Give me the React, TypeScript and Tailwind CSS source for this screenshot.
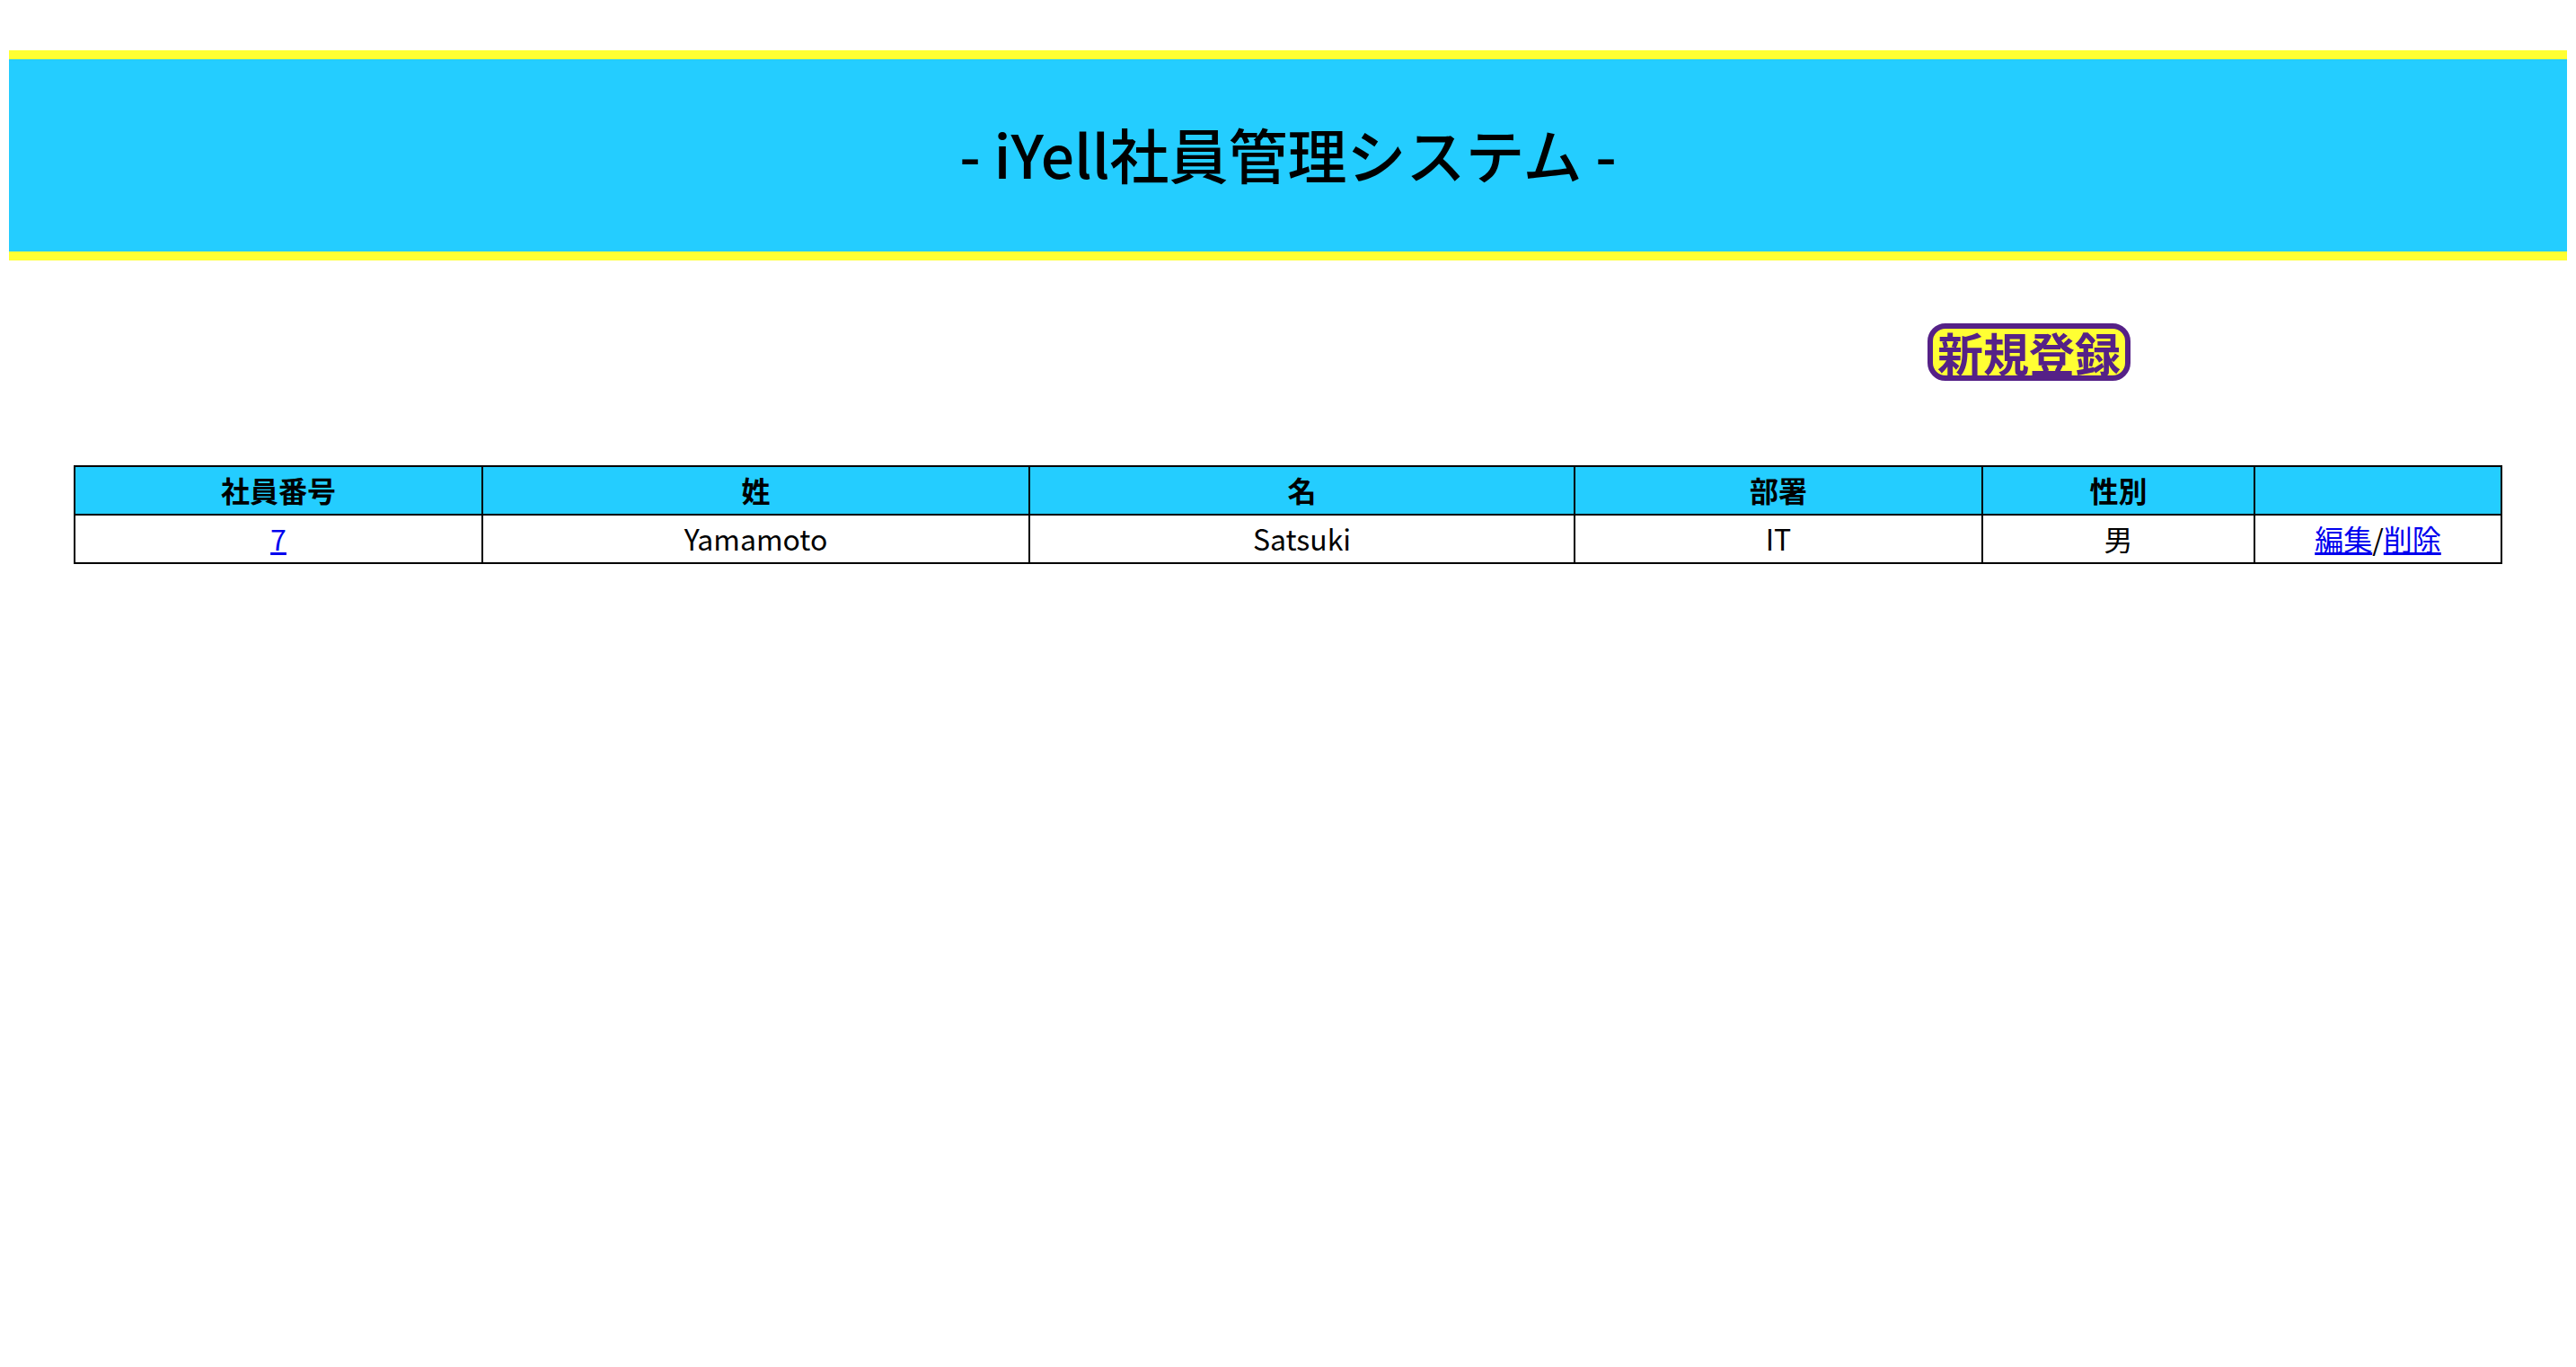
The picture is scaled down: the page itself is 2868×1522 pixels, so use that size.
const font = { fontFamily: '"Noto Sans CJK JP", "Noto Sans", sans-serif' }

const columns = [
  { label: '社員番号', width: 'w-[454px]' },
  { label: '姓', width: 'w-[609px]' },
  { label: '名', width: 'w-[607px]' },
  { label: '部署', width: 'w-[454px]' },
  { label: '性別', width: 'w-[303px]' },
  { label: '', width: 'w-[275px]' },
]

const employees = [{ id: 7, lastName: 'Yamamoto', firstName: 'Satsuki', dept: 'IT', gender: '男' }]

export default function App() {
  return (
    <div className="min-h-[1522px] bg-white text-black" style={font}>
      <div className="pt-[56px] px-[10px]">
        <header className="h-[234px] bg-[#24cdff] border-y-[10px] border-[#ffff33] flex items-center justify-center">
          <h1 className="text-[66px] leading-none font-medium pb-[6px]">- iYell社員管理システム -</h1>
        </header>
      </div>

      <div className="flex mt-[70px] pl-[2146px]">
        <a
          href="#"
          className="h-[64px] px-[5px] flex items-center rounded-[20px] border-[6px] border-[#552187] bg-[#ffff33] text-[#552187] text-[51px] leading-none font-bold"
        >
          新規登録
        </a>
      </div>

      <div className="mt-[94px] px-[82px]">
        <table className="w-[2704px] border-collapse border-2 border-black text-[32px]">
          <thead>
            <tr className="bg-[#24cdff] h-[54px]">
              {columns.map((c, i) => (
                <th key={i} className={`${c.width} border-2 border-black font-bold p-0 leading-none pb-[2px]`}>
                  {c.label}
                </th>
              ))}
            </tr>
          </thead>
          <tbody>
            {employees.map((e) => (
              <tr key={e.id} className="h-[54px] text-center leading-none">
                <td className="border-2 border-black p-0 pb-[2px]">
                  <a href="#" className="text-[#0000ee] underline">{e.id}</a>
                </td>
                <td className="border-2 border-black p-0 pb-[2px]">{e.lastName}</td>
                <td className="border-2 border-black p-0 pb-[2px]">{e.firstName}</td>
                <td className="border-2 border-black p-0 pb-[2px]">{e.dept}</td>
                <td className="border-2 border-black p-0 pb-[2px]">{e.gender}</td>
                <td className="border-2 border-black p-0 pb-[2px]">
                  <a href="#" className="text-[#0000ee] underline">編集</a>/<a href="#" className="text-[#0000ee] underline">削除</a>
                </td>
              </tr>
            ))}
          </tbody>
        </table>
      </div>
    </div>
  )
}
